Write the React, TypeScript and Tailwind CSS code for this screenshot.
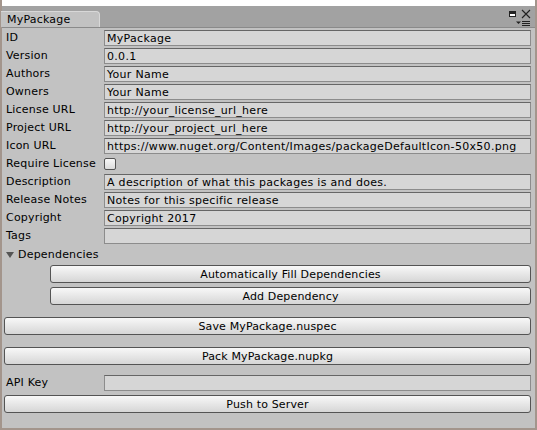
import React from 'react';

const font = { fontFamily: '"DejaVu Sans", Verdana, sans-serif' };

const fields: [string, string][] = [
  ['ID', 'MyPackage'],
  ['Version', '0.0.1'],
  ['Authors', 'Your Name'],
  ['Owners', 'Your Name'],
  ['License URL', 'http://your_license_url_here'],
  ['Project URL', 'http://your_project_url_here'],
  ['Icon URL', 'https://www.nuget.org/Content/Images/packageDefaultIcon-50x50.png'],
];

const fields2: [string, string][] = [
  ['Description', 'A description of what this packages is and does.'],
  ['Release Notes', 'Notes for this specific release'],
  ['Copyright', 'Copyright 2017'],
  ['Tags', ''],
];

const Label = ({ children }: { children: React.ReactNode }) => (
  <div className="w-[102px] shrink-0 pl-[4px] text-[11px] leading-[18px] tracking-[0.2px] text-black whitespace-nowrap">{children}</div>
);

const Field = ({ label, value }: { label: string; value: string }) => (
  <div className="flex h-[18px] items-center">
    <Label>{label}</Label>
    <div className="flex h-[16px] flex-1 items-center border border-[#8c8c8c] border-t-[#666] bg-[#d6d6d6] px-[2px] text-[11px] leading-none tracking-[0.3px] text-black whitespace-nowrap overflow-hidden">
      {value}
    </div>
  </div>
);

const Button = ({ children }: { children: React.ReactNode }) => (
  <div className="flex h-[18px] items-center justify-center rounded-[3px] border border-[#545454] bg-gradient-to-b from-[#f8f8f8] to-[#d6d6d6] text-[11px] leading-none tracking-[0.15px] text-black">
    {children}
  </div>
);

export default function App() {
  return (
    <div className="h-[430px] w-[537px] bg-white" style={font}>
      <div className="h-[6px] border-x-[2px] border-[#a3958c] bg-white" />
      <div className="flex h-[424px] flex-col border-x-[2px] border-b-[2px] border-[#a3958c] bg-[#c2c2c2]">
        {/* tab bar */}
        <div className="relative flex h-[22px] shrink-0 items-end border-b border-[#8a8a8a] bg-[#a2a2a2]">
          <div className="ml-[-1px] flex h-[16px] w-[99px] items-center rounded-tr-[4px] border-t border-r border-[#d8d8d8] bg-[#c2c2c2] pl-[6px] text-[11px] leading-none tracking-[0.2px] text-black">
            MyPackage
          </div>
          <div className="absolute right-[19px] top-[5px] h-[6px] w-[7px] border border-t-[3px] border-[#222] bg-white" />
          <svg className="absolute right-[4px] top-[3px]" width="10" height="10" viewBox="0 0 10 10">
            <path d="M1 1L9 9M9 1L1 9" stroke="#222" strokeWidth="1.1" />
          </svg>
          <svg className="absolute right-[4px] top-[14px]" width="15" height="7" viewBox="0 0 15 7">
            <path d="M0 1.5H5L2.5 4Z" fill="#222" />
            <path d="M6 1.5H14M6 3.5H14M6 5.5H14" stroke="#222" strokeWidth="1" />
          </svg>
        </div>

        <div className="flex flex-col pr-[4px] pt-[1px]">
          {fields.map(([l, v]) => (
            <Field key={l} label={l} value={v} />
          ))}
          <div className="flex h-[18px] items-center">
            <Label>Require License</Label>
            <div className="h-[12px] w-[12px] rounded-[2px] border border-[#555] bg-gradient-to-b from-[#f8f8f8] to-[#dcdcdc]" />
          </div>
          {fields2.map(([l, v]) => (
            <Field key={l} label={l} value={v} />
          ))}
          <div className="flex h-[18px] items-center pl-[3px] text-[11px] leading-none tracking-[0.2px] text-black">
            <svg width="10" height="9" viewBox="0 0 10 9" className="mr-[3px]">
              <path d="M1 2H9L5 8Z" fill="#555" />
            </svg>
            Dependencies
          </div>
          <div className="mt-[2px] flex flex-col gap-[4px] pl-[48px]">
            <Button>Automatically Fill Dependencies</Button>
            <Button>Add Dependency</Button>
          </div>
          <div className="mt-[12px] pl-[2px]">
            <Button>Save MyPackage.nuspec</Button>
          </div>
          <div className="mt-[12px] pl-[2px]">
            <Button>Pack MyPackage.nupkg</Button>
          </div>
          <div className="mt-[9px]">
            <Field label="API Key" value="" />
          </div>
          <div className="mt-[3px] pl-[2px]">
            <Button>Push to Server</Button>
          </div>
        </div>
      </div>
    </div>
  );
}
